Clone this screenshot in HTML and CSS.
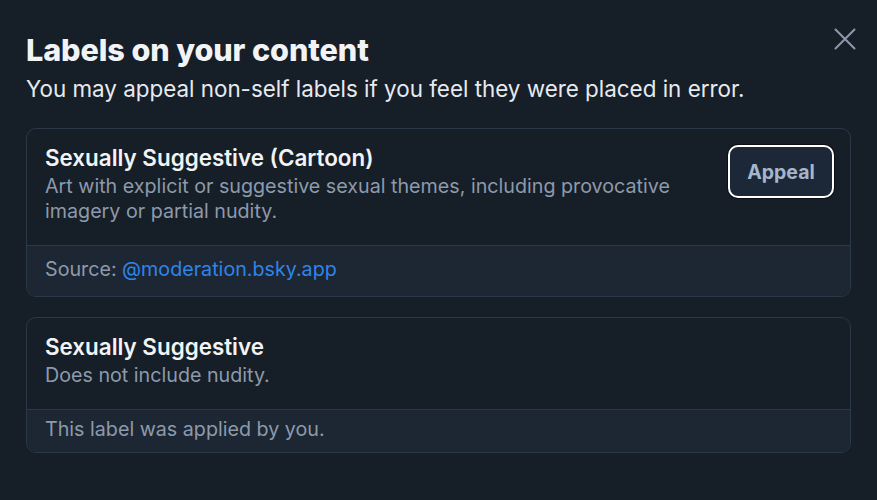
FILE: index.html
```html
<!DOCTYPE html>
<html lang="en">
<head>
    <meta charset="UTF-8">
    <title>Labels on your content</title>
    <link rel="stylesheet" href="styles.css">
</head>
<body>
    <div class="dialog">
        <div class="header">
            <div class="heading">
                <h1>Labels on your content</h1>
                <p class="intro">You may appeal non-self labels if you feel they were placed in error.</p>
            </div>
            <button class="close" aria-label="Close">
                <svg width="22" height="22" viewBox="0 0 22 22" fill="none" stroke="currentColor" stroke-width="2" stroke-linecap="round">
                    <path d="M1.5 1.5L20.5 20.5M20.5 1.5L1.5 20.5"/>
                </svg>
            </button>
        </div>

        <div class="card">
            <div class="card-body">
                <div class="card-text">
                    <h2>Sexually Suggestive (Cartoon)</h2>
                    <p>Art with explicit or suggestive sexual themes, including provocative imagery or partial nudity.</p>
                </div>
                <button class="appeal">Appeal</button>
            </div>
            <div class="card-foot source">Source: <a href="#">@moderation.bsky.app</a></div>
        </div>

        <div class="card">
            <div class="card-body">
                <div class="card-text">
                    <h2>Sexually Suggestive</h2>
                    <p>Does not include nudity.</p>
                </div>
            </div>
            <div class="card-foot">This label was applied by you.</div>
        </div>
    </div>
</body>
</html>
```
FILE: styles.css
```css
* {
    box-sizing: border-box;
}
body {
    margin: 0;
    background: #161e28;
    font-family: Inter, "Noto Sans", sans-serif;
    color: #f1f3f5;
}
.dialog {
    padding: 32px 26px 0 26px;
}
.header {
    display: flex;
    justify-content: space-between;
    align-items: flex-start;
}
h1 {
    margin: 0;
    font-size: 30.6px;
    font-weight: 800;
    line-height: 36px;
    letter-spacing: -0.1px;
}
.intro {
    margin: 6px 0 0 0;
    font-size: 22.4px;
    line-height: 30px;
    color: #e6eaef;
}
.close {
    flex: none;
    background: none;
    border: none;
    padding: 0;
    margin: -7px -8px 0 0;
    color: #8d9aab;
    width: 28px;
    height: 28px;
    display: flex;
    align-items: center;
    justify-content: center;
}
.card {
    margin-top: 24px;
    border: 1px solid #2b3847;
    border-radius: 10px;
    overflow: hidden;
}
.card + .card {
    margin-top: 20px;
}
.card-body {
    display: flex;
    justify-content: space-between;
    align-items: flex-start;
    gap: 20px;
    padding: 14px 16px 21px 18px;
}
h2 {
    margin: 0;
    font-size: 22.4px;
    font-weight: 600;
    line-height: 29px;
    color: #f1f3f5;
}
.card-text p {
    margin: 2px 0 0 0;
    font-size: 19.7px;
    line-height: 25px;
    color: #8d9aab;
}
.appeal {
    flex: none;
    background: #1c2838;
    border: 2.5px solid #ffffff;
    border-radius: 10px;
    box-shadow: 0 0 0 1px #0b0f14;
    padding: 0;
    width: 106px;
    height: 53px;
    margin-top: 2px;
    font-family: inherit;
    font-size: 19.5px;
    font-weight: 700;
    color: #a6b6ca;
}
.card-foot {
    background: #1d2733;
    border-top: 1px solid #2b3847;
    padding: 7px 18px 10px 18px;
    font-size: 19.7px;
    line-height: 25px;
    color: #8d9aab;
}
.card-foot.source {
    padding: 11px 18px 14px 18px;
}
.card-foot a {
    color: #2f84ea;
    text-decoration: none;
}
```
